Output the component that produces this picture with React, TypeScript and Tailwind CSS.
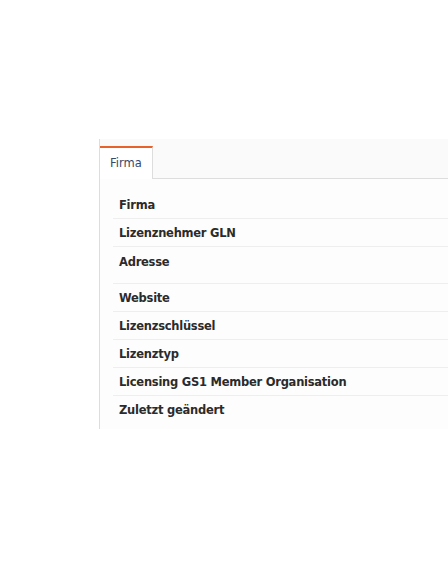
const rows: { label: string; tall?: boolean }[] = [
  { label: 'Firma' },
  { label: 'Lizenznehmer GLN' },
  { label: 'Adresse', tall: true },
  { label: 'Website' },
  { label: 'Lizenzschlüssel' },
  { label: 'Lizenztyp' },
  { label: 'Licensing GS1 Member Organisation' },
  { label: 'Zuletzt geändert' },
];

export default function App() {
  return (
    <div className="h-[568px] w-[448px] overflow-hidden bg-white pl-[99px] pt-[139px] font-['DejaVu_Sans',Verdana,sans-serif]">
      <div className="border-l border-[#dddddd]">
        <div className="flex h-[40px] items-end border-b border-[#dddddd] bg-[#fafafa]">
          <div className="-mb-px flex h-[33px] w-[53px] items-center border-r border-t-2 border-[#dddddd] border-t-[#e8632b] bg-white pl-[10px] text-[11.5px] text-[#34496e]">
            Firma
          </div>
        </div>
        <div className="bg-[#fdfdfd] pb-[5px] pl-[13px] pt-[12px]">
          {rows.map((r) => (
            <div
              key={r.label}
              className={`flex border-b border-[#eeeeee] pl-[6px] text-[11.5px] font-bold tracking-[-0.25px] text-[#2b2b2b] last:border-b-transparent ${
                r.tall ? 'h-[37px] items-start pt-[7px]' : 'h-[28px] items-center pt-[3px]'
              }`}
            >
              {r.label}
            </div>
          ))}
        </div>
      </div>
    </div>
  );
}
